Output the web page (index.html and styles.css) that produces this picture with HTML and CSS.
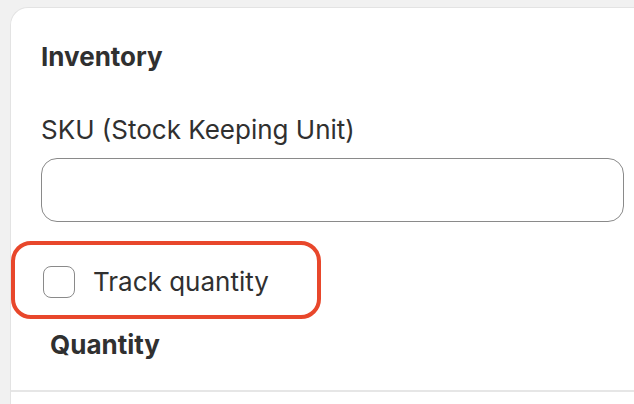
FILE: index.html
```html
<!DOCTYPE html>
<html lang="en">
<head>
<meta charset="utf-8">
<title>Inventory</title>
<link rel="stylesheet" href="styles.css">
</head>
<body>
<div class="page">
  <section class="card">
    <div class="card-section">
      <h2 class="title">Inventory</h2>
      <label class="field">
        <span class="field-label">SKU (Stock Keeping Unit)</span>
        <span class="input"></span>
      </label>
      <div class="highlight">
        <label class="check-row">
          <span class="checkbox"></span>
          <span class="check-label">Track quantity</span>
        </label>
      </div>
      <h3 class="subtitle">Quantity</h3>
    </div>
    <div class="card-rest"></div>
  </section>
</div>
</body>
</html>
```

FILE: styles.css
```css
* { box-sizing: border-box; }
html, body { margin: 0; padding: 0; }
body {
  background: #f1f1f1;
  font-family: "Inter", "Noto Sans", "Liberation Sans", sans-serif;
  color: #303030;
  overflow: hidden;
  height: 404px;
}
.page {
  padding: 7px 0 0 10px;
  height: 404px;
  overflow: hidden;
}
.card {
  background: #ffffff;
  border-top: 1px solid #e3e3e3;
  border-left: 1px solid #e3e3e3;
  border-top-left-radius: 18px;
  height: 397px;
  display: flex;
  flex-direction: column;
}
.card-section {
  flex: 0 0 auto;
  padding: 33px 0 0 30px;
  border-bottom: 2px solid #e6e6e6;
  height: 384px;
}
.card-rest {
  flex: 1 1 auto;
}
.title {
  margin: 0;
  font-size: 26px;
  line-height: 32px;
  font-weight: 650;
}
.field {
  display: flex;
  flex-direction: column;
  gap: 12px;
  margin-top: 41px;
  margin-right: 10px;
}
.field-label {
  font-size: 26px;
  line-height: 32px;
  font-weight: 400;
}
.input {
  display: block;
  height: 64px;
  border: 1px solid #8a8a8a;
  border-radius: 16px;
  background: #fff;
}
.highlight {
  margin: 19px 0 0 -30px;
  width: 310px;
  height: 78px;
  border: 4px solid #e8472b;
  border-radius: 20px;
  display: flex;
  align-items: center;
  padding: 3px 0 0 28px;
}
.check-row {
  display: flex;
  align-items: center;
  gap: 18px;
}
.checkbox {
  width: 32px;
  height: 32px;
  border: 1px solid #8a8a8a;
  border-radius: 8px;
  background: #fff;
}
.check-label {
  font-size: 26px;
  line-height: 32px;
}
.subtitle {
  margin: 10px 0 0 9px;
  font-size: 26px;
  line-height: 32px;
  font-weight: 650;
}
```
